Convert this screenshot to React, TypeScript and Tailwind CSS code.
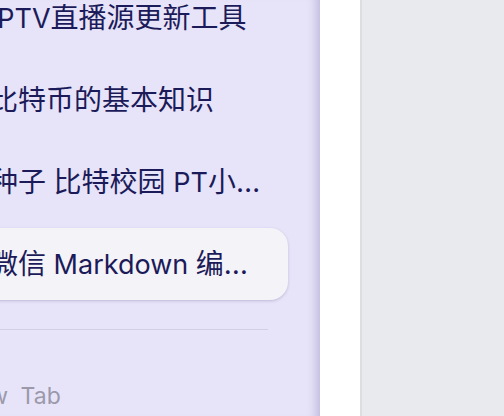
import React from "react";

const font = {
  fontFamily: '"Inter", "Noto Sans CJK SC", sans-serif',
};

function L({ children }: { children: React.ReactNode }) {
  return <span className="text-[27px]">{children}</span>;
}

function Row({ children, active }: { children: React.ReactNode; active?: boolean }) {
  return (
    <div
      className={
        "flex h-[72px] w-[328px] shrink-0 items-center rounded-[18px] pl-[30px] pr-[22px] " +
        (active ? "bg-[#f4f3f8] shadow-[0_1px_3px_rgba(40,30,90,0.22)]" : "")
      }
    >
      <span className="truncate text-[28px] leading-none text-[#1c1b5a]">{children}</span>
    </div>
  );
}

export default function App() {
  return (
    <div className="flex h-[416px] w-[504px] overflow-hidden" style={font}>
      <div className="relative flex h-full w-[320px] shrink-0 flex-col overflow-hidden bg-[#e7e4f9] shadow-[inset_-12px_0_10px_-8px_rgba(120,110,170,0.35)]">
        <div className="-ml-[40px] -mt-[18px] flex flex-col gap-[10px]">
          <Row>
            <L>IPTV</L>直播源更新工具
          </Row>
          <Row>比特币的基本知识</Row>
          <Row>
            种子<L> </L>比特校园<L> PT</L>小站<L> - </L>首页
          </Row>
          <Row active>
            微信<L> Markdown </L>编辑器
          </Row>
        </div>
        <div className="-ml-[40px] mt-[29px] h-px w-[308px] bg-[#d2cfe3]" />
        <div className="-ml-[41px] mt-[47px] flex h-[72px] items-center">
          <span className="text-[23px] leading-none text-[#9b99aa] [word-spacing:6px]">New Tab</span>
        </div>
      </div>
      <div className="h-full w-[40px] shrink-0 bg-white" />
      <div className="h-full flex-1 border-l-2 border-[#dedee1] bg-[#e9eaed]" />
    </div>
  );
}
